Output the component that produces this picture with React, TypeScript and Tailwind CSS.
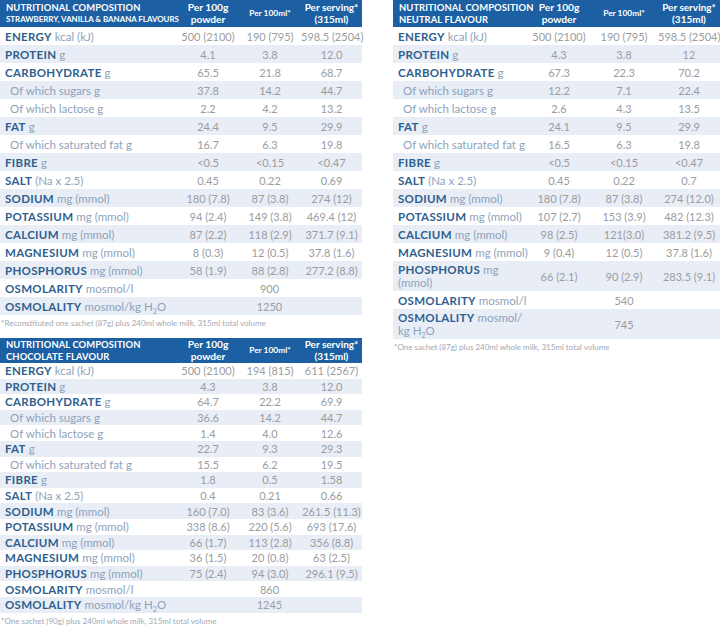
import React from 'react';

type Row = {
  label: string;
  unit?: React.ReactNode;
  sub?: boolean;
  values: string[];
  wrap?: boolean;
};

type TableProps = {
  title: string;
  flavour: string;
  smallFlavour?: boolean;
  rows: Row[];
  note: string;
  rowH: string;
  headH: string;
  cols: [string, string, string, string];
};

const font = { fontFamily: 'Lato, "Open Sans", sans-serif' };

const h2o = (
  <>
    kg H<sub className="text-[7px] align-baseline relative top-[3px]">2</sub>O
  </>
);

const baseRows = (v: string[][]): Row[] => [
  { label: 'ENERGY', unit: 'kcal (kJ)', values: v[0] },
  { label: 'PROTEIN', unit: 'g', values: v[1] },
  { label: 'CARBOHYDRATE', unit: 'g', values: v[2] },
  { label: 'Of which sugars g', sub: true, values: v[3] },
  { label: 'Of which lactose g', sub: true, values: v[4] },
  { label: 'FAT', unit: 'g', values: v[5] },
  { label: 'Of which saturated fat g', sub: true, values: v[6] },
  { label: 'FIBRE', unit: 'g', values: v[7] },
  { label: 'SALT', unit: '(Na x 2.5)', values: v[8] },
  { label: 'SODIUM', unit: 'mg (mmol)', values: v[9] },
  { label: 'POTASSIUM', unit: 'mg (mmol)', values: v[10] },
  { label: 'CALCIUM', unit: 'mg (mmol)', values: v[11] },
  { label: 'MAGNESIUM', unit: 'mg (mmol)', values: v[12] },
];

const strawberry: Row[] = [
  ...baseRows([
    ['500 (2100)', '190 (795)', '598.5 (2504)'],
    ['4.1', '3.8', '12.0'],
    ['65.5', '21.8', '68.7'],
    ['37.8', '14.2', '44.7'],
    ['2.2', '4.2', '13.2'],
    ['24.4', '9.5', '29.9'],
    ['16.7', '6.3', '19.8'],
    ['<0.5', '<0.15', '<0.47'],
    ['0.45', '0.22', '0.69'],
    ['180 (7.8)', '87 (3.8)', '274 (12)'],
    ['94 (2.4)', '149 (3.8)', '469.4 (12)'],
    ['87 (2.2)', '118 (2.9)', '371.7 (9.1)'],
    ['8 (0.3)', '12 (0.5)', '37.8 (1.6)'],
  ]),
  { label: 'PHOSPHORUS', unit: 'mg (mmol)', values: ['58 (1.9)', '88 (2.8)', '277.2 (8.8)'] },
  { label: 'OSMOLARITY', unit: 'mosmol/l', values: ['900'] },
  { label: 'OSMOLALITY', unit: <>mosmol/{h2o}</>, values: ['1250'] },
];

const chocolate: Row[] = [
  ...baseRows([
    ['500 (2100)', '194 (815)', '611 (2567)'],
    ['4.3', '3.8', '12.0'],
    ['64.7', '22.2', '69.9'],
    ['36.6', '14.2', '44.7'],
    ['1.4', '4.0', '12.6'],
    ['22.7', '9.3', '29.3'],
    ['15.5', '6.2', '19.5'],
    ['1.8', '0.5', '1.58'],
    ['0.4', '0.21', '0.66'],
    ['160 (7.0)', '83 (3.6)', '261.5 (11.3)'],
    ['338 (8.6)', '220 (5.6)', '693 (17.6)'],
    ['66 (1.7)', '113 (2.8)', '356 (8.8)'],
    ['36 (1.5)', '20 (0.8)', '63 (2.5)'],
  ]),
  { label: 'PHOSPHORUS', unit: 'mg (mmol)', values: ['75 (2.4)', '94 (3.0)', '296.1 (9.5)'] },
  { label: 'OSMOLARITY', unit: 'mosmol/l', values: ['860'] },
  { label: 'OSMOLALITY', unit: <>mosmol/{h2o}</>, values: ['1245'] },
];

const neutral: Row[] = [
  ...baseRows([
    ['500 (2100)', '190 (795)', '598.5 (2504)'],
    ['4.3', '3.8', '12'],
    ['67.3', '22.3', '70.2'],
    ['12.2', '7.1', '22.4'],
    ['2.6', '4.3', '13.5'],
    ['24.1', '9.5', '29.9'],
    ['16.5', '6.3', '19.8'],
    ['<0.5', '<0.15', '<0.47'],
    ['0.45', '0.22', '0.7'],
    ['180 (7.8)', '87 (3.8)', '274 (12.0)'],
    ['107 (2.7)', '153 (3.9)', '482 (12.3)'],
    ['98 (2.5)', '121(3.0)', '381.2 (9.5)'],
    ['9 (0.4)', '12 (0.5)', '37.8 (1.6)'],
  ]),
  { label: 'PHOSPHORUS', unit: <>mg<br />(mmol)</>, wrap: true, values: ['66 (2.1)', '90 (2.9)', '283.5 (9.1)'] },
  { label: 'OSMOLARITY', unit: 'mosmol/l', values: ['540'] },
  { label: 'OSMOLALITY', unit: <>mosmol/<br />{h2o}</>, wrap: true, values: ['745'] },
];

// One nutrition table: blue header, alternating light rows, footnote below
const NutritionTable: React.FC<TableProps> = ({ title, flavour, smallFlavour, rows, note, rowH, headH, cols }) => (
  <div style={font}>
    <table className="w-full table-fixed border-collapse">
      <colgroup>
        {cols.map((w, i) => (
          <col key={i} style={{ width: w }} />
        ))}
      </colgroup>
      <thead>
        <tr className={`bg-[#1c5fa2] text-white ${headH}`}>
          <th className="p-0 text-left font-bold pl-[6px] leading-[11.5px] align-middle">
            <div className="text-[9.4px] tracking-[0.1px] whitespace-nowrap">{title}</div>
            <div className={smallFlavour ? 'text-[7.9px] whitespace-nowrap' : 'text-[9.4px] tracking-[0.1px] whitespace-nowrap'}>
              {flavour}
            </div>
          </th>
          <th className="p-0 font-bold text-[10.2px] leading-[11.5px] text-center">
            Per 100g
            <br />
            powder
          </th>
          <th className="p-0 font-bold text-[8.4px] leading-[11px] text-center">Per 100ml*</th>
          <th className="p-0 font-bold text-[10px] leading-[11.5px] text-center whitespace-nowrap">
            Per serving*
            <br />
            (315ml)
          </th>
        </tr>
      </thead>
      <tbody>
        {rows.map((r, i) => (
          <tr key={i} className={`${i % 2 === 1 ? 'bg-[#e8edf6]' : 'bg-white'} ${r.wrap ? 'h-[30px]' : rowH}`}>
            <td className={`p-0 text-[11.5px] leading-[13px] ${r.sub ? 'pl-[10px]' : 'pl-[5px]'} ${r.wrap ? '' : 'whitespace-nowrap'} align-middle`}>
              {r.sub ? (
                <span className="text-[#8ea3bb]">{r.label}</span>
              ) : (
                <>
                  <span className="font-bold text-[#2f5f8e] tracking-[0.3px]">{r.label}</span>{' '}
                  <span className="text-[#8ea3bb]">{r.unit}</span>
                </>
              )}
            </td>
            {r.values.length === 1 ? (
              <td colSpan={3} className="p-0 text-center text-[11px] leading-[13px] text-[#9a9ca1]">
                {r.values[0]}
              </td>
            ) : (
              r.values.map((v, j) => (
                <td key={j} className="p-0 text-center text-[11px] leading-[13px] text-[#9a9ca1] whitespace-nowrap">
                  {v}
                </td>
              ))
            )}
          </tr>
        ))}
      </tbody>
    </table>
    <div className="text-[8px] text-[#9fa8b3] pl-[1px] pt-[3px] leading-[10px] whitespace-nowrap">{note}</div>
  </div>
);

export default function App() {
  return (
    <div className="w-[720px] h-[626px] bg-white flex overflow-hidden">
      <div className="w-[362px] shrink-0 flex flex-col">
        <NutritionTable
          title="NUTRITIONAL COMPOSITION"
          flavour="STRAWBERRY, VANILLA & BANANA FLAVOURS"
          smallFlavour
          rows={strawberry}
          note="*Reconstituted one sachet (87g) plus 240ml whole milk, 315ml total volume"
          rowH="h-[18px]"
          headH="h-[27px]"
          cols={['177px', '62px', '62px', '61px']}
        />
        <div className="h-[10px] shrink-0" />
        <NutritionTable
          title="NUTRITIONAL COMPOSITION"
          flavour="CHOCOLATE FLAVOUR"
          rows={chocolate}
          note="*One sachet (90g) plus 240ml whole milk, 315ml total volume"
          rowH="h-[15.6px]"
          headH="h-[25px]"
          cols={['177px', '62px', '62px', '61px']}
        />
      </div>
      <div className="w-[327px] shrink-0 ml-[31px]">
        <NutritionTable
          title="NUTRITIONAL COMPOSITION"
          flavour="NEUTRAL FLAVOUR"
          rows={neutral}
          note="*One sachet (87g) plus 240ml whole milk, 315ml total volume"
          rowH="h-[18px]"
          headH="h-[27px]"
          cols={['135px', '62px', '68px', '62px']}
        />
      </div>
    </div>
  );
}
